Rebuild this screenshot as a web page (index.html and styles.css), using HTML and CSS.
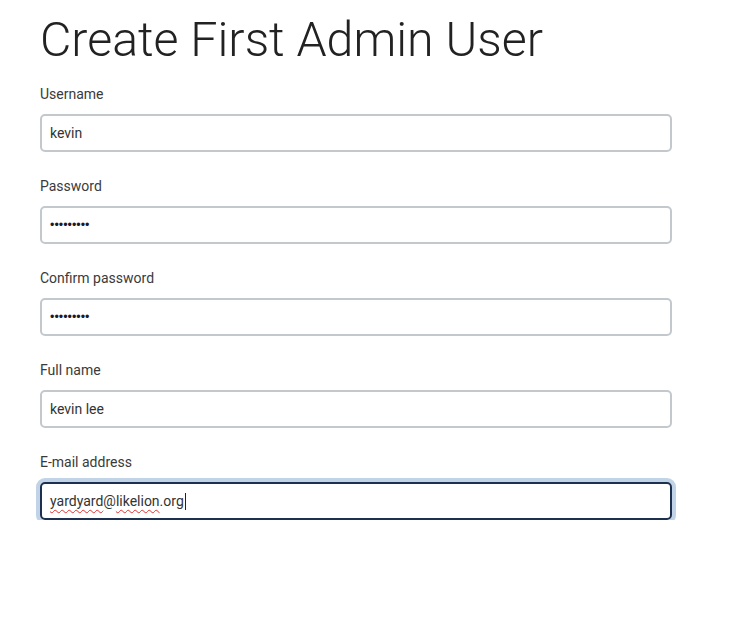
FILE: index.html
```html
<!DOCTYPE html>
<html>
<head>
<meta charset="utf-8">
<link rel="stylesheet" href="styles.css">
</head>
<body>
<div class="page">
  <h1 class="title">Create First Admin User</h1>
  <form class="form">
    <div class="field">
      <label class="label">Username</label>
      <div class="input">kevin</div>
    </div>
    <div class="field">
      <label class="label">Password</label>
      <div class="input dots">•••••••••</div>
    </div>
    <div class="field">
      <label class="label">Confirm password</label>
      <div class="input dots">•••••••••</div>
    </div>
    <div class="field">
      <label class="label">Full name</label>
      <div class="input">kevin lee</div>
    </div>
    <div class="field">
      <label class="label">E-mail address</label>
      <div class="input focused"><span class="spell">yardyard</span>@<span class="spell">likelion</span>.org<span class="caret"></span></div>
    </div>
  </form>
</div>
</body>
</html>
```
FILE: styles.css
```css
html, body {
  margin: 0;
  padding: 0;
  background: #fff;
}
.page {
  padding: 12px 0 0 40px;
  font-family: Roboto, "Liberation Sans", sans-serif;
  color: #333;
}
.title {
  margin: 0;
  font-weight: 300;
  font-size: 48.3px;
  line-height: 56px;
  color: #222;
  letter-spacing: 0;
}
.form {
  display: flex;
  flex-direction: column;
  gap: 26px;
  margin-top: 18px;
  width: 632px;
}
.field {
  display: flex;
  flex-direction: column;
  gap: 12px;
}
.label {
  font-size: 14px;
  line-height: 16px;
  color: #3a3a3a;
}
.input {
  box-sizing: border-box;
  height: 38px;
  border: 2px solid #c3c8cd;
  border-radius: 5px;
  padding: 0 8px;
  display: flex;
  align-items: center;
  font-size: 14px;
  color: #333;
}
.dots {
  font-family: "Liberation Sans", sans-serif;
  font-size: 12.5px;
  color: #1a1a2a;
}
.focused {
  border-color: #1d3050;
  box-shadow: 0 0 0 4px #c1d3e6;
}
.spell {
  text-decoration: underline wavy #e03030;
  text-decoration-thickness: 1px;
  text-underline-offset: 3px;
}
.caret {
  display: inline-block;
  width: 1px;
  height: 17px;
  background: #222;
  margin-left: 1px;
}
```
